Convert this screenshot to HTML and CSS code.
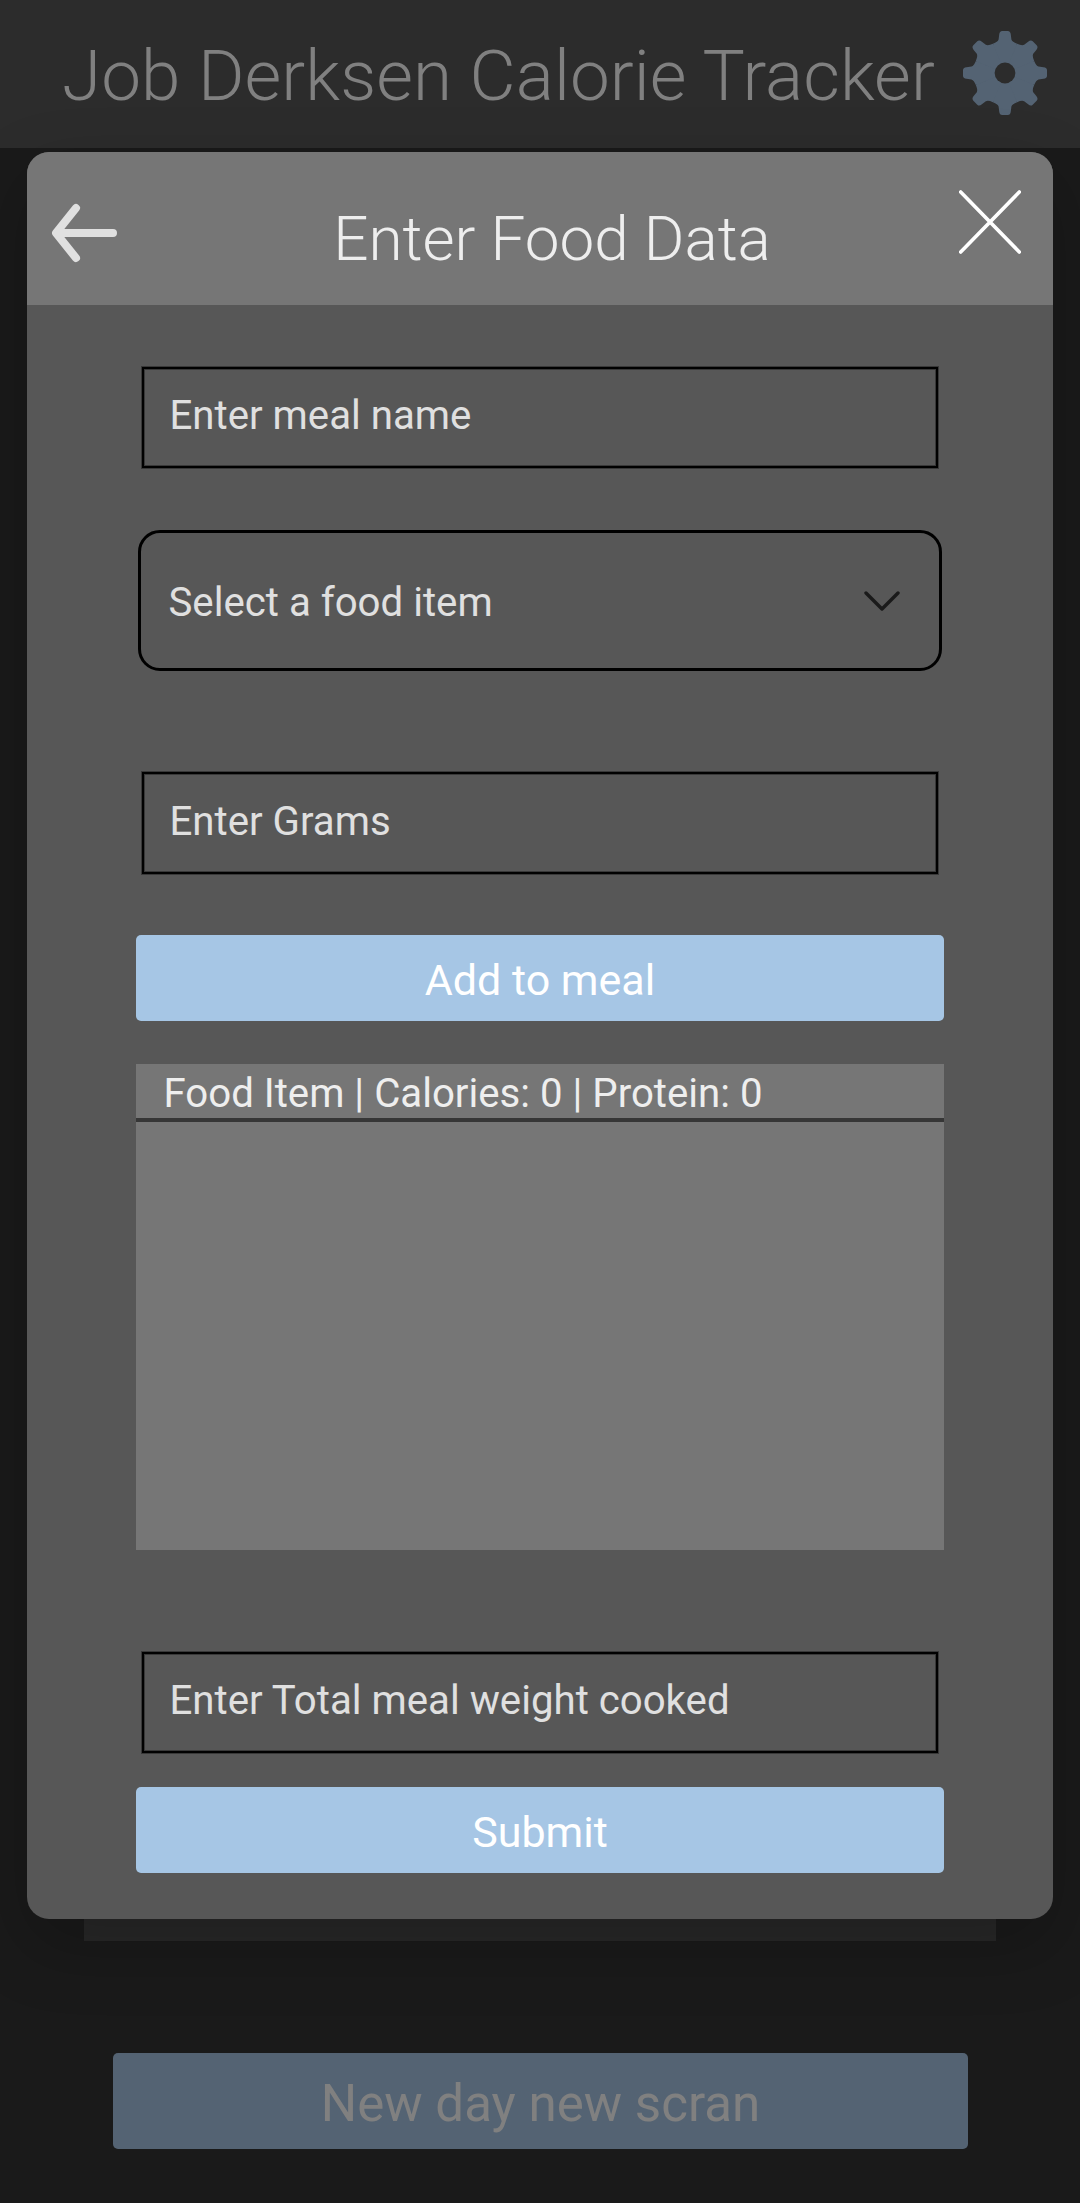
FILE: index.html
```html
<!DOCTYPE html>
<html lang="en">
<head>
<meta charset="utf-8">
<title>Job Derksen Calorie Tracker</title>
<link rel="stylesheet" href="styles.css">
</head>
<body>
<div class="app">
  <header class="app-header">
    <h1 class="app-title">Job Derksen Calorie Tracker</h1>
    <svg class="gear" viewBox="-42 -42 84 84" aria-label="Settings">
      <defs>
        <path id="tooth" d="M0 0L-12.1 -29.2Q-7.2 -31 -6.4 -33.5L-5.8 -38.5Q-5.4 -42 -2.8 -42H2.8Q5.4 -42 5.8 -38.5L6.4 -33.5Q7.2 -31 12.1 -29.2Z"/>
      </defs>
      <g class="gear-body">
        <circle r="30.5"/>
        <use href="#tooth"/>
        <use href="#tooth" transform="rotate(45)"/>
        <use href="#tooth" transform="rotate(90)"/>
        <use href="#tooth" transform="rotate(135)"/>
        <use href="#tooth" transform="rotate(180)"/>
        <use href="#tooth" transform="rotate(225)"/>
        <use href="#tooth" transform="rotate(270)"/>
        <use href="#tooth" transform="rotate(315)"/>
      </g>
      <circle class="gear-hole" r="10.4"/>
    </svg>
  </header>
  <div class="day-card"></div>
  <button class="new-day">New day new scran</button>

  <section class="modal" role="dialog">
    <div class="modal-header">
      <svg class="back" viewBox="0 0 66 60" aria-label="Back">
        <path d="M25 5L5 30L25 55M6 30H62"/>
      </svg>
      <h2 class="modal-title">Enter Food Data</h2>
      <svg class="close" viewBox="0 0 62 64" aria-label="Close">
        <path d="M1.7 2L60.3 62M60.3 2L1.7 62"/>
      </svg>
    </div>
    <div class="modal-body">
      <div class="field meal-name">Enter meal name</div>
      <div class="select">
        <span>Select a food item</span>
        <svg class="chevron" viewBox="0 0 36 20"><path d="M2 2L18 18L34 2"/></svg>
      </div>
      <div class="field grams">Enter Grams</div>
      <button class="button add">Add to meal</button>
      <div class="items">
        <div class="items-head">Food Item | Calories: 0 | Protein: 0</div>
      </div>
      <div class="field weight">Enter Total meal weight cooked</div>
      <button class="button submit">Submit</button>
    </div>
  </section>
</div>
</body>
</html>
```
FILE: styles.css
```css
* { box-sizing: border-box; }

body {
  margin: 0;
  background: #1a1a1a;
  font-family: Roboto, sans-serif;
}

.app {
  position: relative;
  display: flex;
  flex-direction: column;
  height: 2203px;
  overflow: hidden;
}

.app-header {
  display: flex;
  align-items: flex-start;
  justify-content: space-between;
  height: 148px;
  padding: 0 33px 0 62px;
  background: #2c2c2c;
}

.app-title {
  margin: 0;
  font-size: 71px;
  font-weight: 300;
  line-height: 151px;
  letter-spacing: 0.08px;
  white-space: nowrap;
  color: #808080;
}

.gear {
  flex: none;
  width: 84px;
  height: 84px;
  margin-top: 31px;
}

.gear-body { fill: #546373; }
.gear-hole { fill: #2c2c2c; }

.day-card {
  height: 1751px;
  margin: 42px 84px 112px;
  background: #282828;
}

.new-day {
  height: 96px;
  margin: 0 112px 0 113px;
  padding: 5px 0 0;
  border: 0;
  border-radius: 5px;
  background: #546373;
  color: #808080;
  font: 400 51.1px Roboto, sans-serif;
}

.modal {
  position: absolute;
  top: 152px;
  left: 27px;
  width: 1026px;
  height: 1767px;
  overflow: hidden;
  border-radius: 22px;
  background: #575757;
  box-shadow: 0 26px 70px rgba(0, 0, 0, 0.22);
}

.modal-header {
  display: grid;
  grid-template-columns: 90px 1fr 66px;
  align-items: start;
  height: 153px;
  background: #767676;
}

.back {
  width: 66px;
  height: 60px;
  margin: 51px 0 0 24px;
  fill: none;
  stroke: #e0e0e0;
  stroke-width: 8;
  stroke-linecap: round;
  stroke-linejoin: round;
}

.modal-title {
  margin: 0;
  padding-top: 20px;
  font-size: 62px;
  font-weight: 300;
  line-height: 133px;
  text-align: center;
  color: #eee;
}

.close {
  width: 62px;
  height: 64px;
  margin: 38px 0 0 -28px;
  fill: none;
  stroke: #fff;
  stroke-width: 3.6;
  stroke-linecap: round;
}

.modal-body {
  display: flex;
  flex-direction: column;
  padding: 62px 109px 46px;
}

.field {
  height: 101px;
  margin: 0 6px;
  padding-left: 25.5px;
  border: 2px solid #000;
  box-shadow: 0 0 0 1px rgba(0, 0, 0, 0.35), inset 0 0 0 1px rgba(0, 0, 0, 0.35);
  font-size: 40.2px;
  line-height: 93px;
  color: #e0e0e0;
}

.select {
  display: flex;
  align-items: center;
  justify-content: space-between;
  height: 141px;
  margin: 62px 2px 0;
  padding: 3px 39px 0 27.5px;
  border: 3px solid #000;
  border-radius: 22px;
  font-size: 40.2px;
  color: #e0e0e0;
}

.chevron {
  width: 36px;
  height: 20px;
  margin-bottom: 3px;
  fill: none;
  stroke: #1a1a1a;
  stroke-width: 3.4;
  stroke-linecap: round;
  stroke-linejoin: round;
}

.grams {
  height: 102px;
  margin-top: 101px;
  line-height: 95px;
}

.button {
  height: 86px;
  padding: 4px 0 0;
  border: 0;
  border-radius: 5px;
  background: #a6c6e5;
  color: #fff;
  font: 400 43px Roboto, sans-serif;
}

.add { margin-top: 61px; }

.items {
  height: 486px;
  margin-top: 43px;
  background: #767676;
}

.items-head {
  height: 58px;
  padding-left: 27.5px;
  border-bottom: 4px solid #363636;
  font-size: 40.2px;
  line-height: 60px;
  color: #eee;
}

.weight { margin-top: 102px; }
.submit { margin-top: 34px; }
```
